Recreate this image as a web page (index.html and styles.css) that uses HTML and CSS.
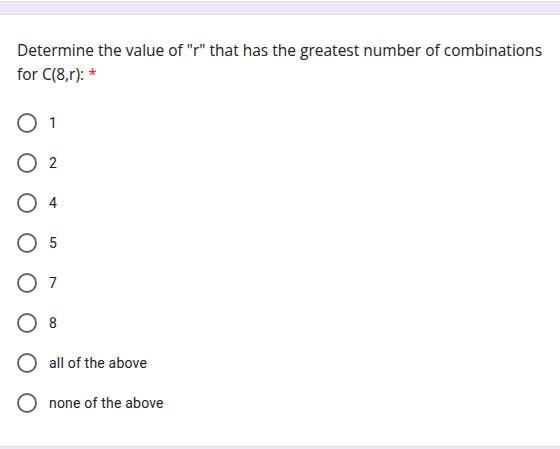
FILE: index.html
```html
<!DOCTYPE html>
<html>
<head>
<meta charset="utf-8">
<link rel="stylesheet" href="styles.css">
</head>
<body>
<div class="prev-card"></div>
<div class="card">
  <div class="question">Determine the value of "r" that has the greatest number of combinations for C(8,r): <span class="req">*</span></div>
  <div class="options">
    <label class="option"><span class="radio"></span><span class="label">1</span></label>
    <label class="option"><span class="radio"></span><span class="label">2</span></label>
    <label class="option"><span class="radio"></span><span class="label">4</span></label>
    <label class="option"><span class="radio"></span><span class="label">5</span></label>
    <label class="option"><span class="radio"></span><span class="label">7</span></label>
    <label class="option"><span class="radio"></span><span class="label">8</span></label>
    <label class="option"><span class="radio"></span><span class="label">all of the above</span></label>
    <label class="option"><span class="radio"></span><span class="label">none of the above</span></label>
  </div>
</div>
</body>
</html>
```
FILE: styles.css
```css
html, body {
  margin: 0;
  padding: 0;
  background: #ede7f6;
}
body {
  width: 560px;
  height: 449px;
  overflow: hidden;
}
.prev-card {
  height: 1px;
  background: #fff;
  border-bottom: 1px solid #dadce0;
  margin-bottom: 12px;
}
.card {
  background: #fff;
  border-top: 1px solid #dadce0;
  border-bottom: 1px solid #dadce0;
  padding: 23px 10px 23px 17px;
  height: 385px;
}
.question {
  font-family: "Open Sans", sans-serif;
  font-size: 15.5px;
  line-height: 24px;
  color: #202124;
  letter-spacing: 0;
}
.req {
  color: #d93025;
}
.options {
  margin-top: 17px;
  display: flex;
  flex-direction: column;
}
.option {
  display: flex;
  align-items: center;
  height: 40px;
  gap: 12px;
}
.radio {
  box-sizing: border-box;
  width: 20px;
  height: 20px;
  border: 2px solid #5f6368;
  border-radius: 50%;
  flex: none;
}
.label {
  font-family: Roboto, sans-serif;
  font-size: 14px;
  letter-spacing: 0.2px;
  color: #202124;
}
```
